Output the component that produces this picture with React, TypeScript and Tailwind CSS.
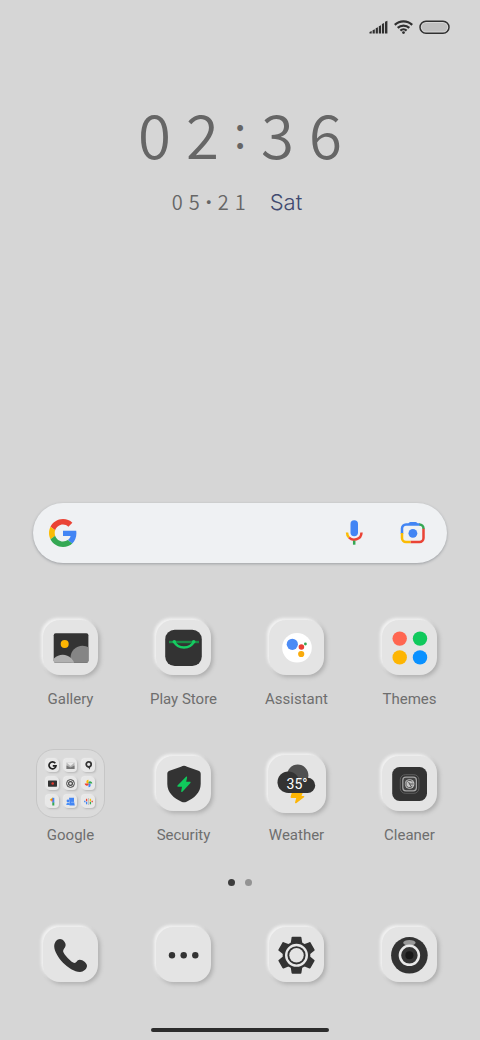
import type { ReactNode } from "react";

type AppItem = { label: string; icon: ReactNode; size?: "large" | "folder" };

function Gallery() {
  return (
    <svg viewBox="0 0 55 55" className="size-full" aria-hidden="true">
      <defs>
        <clipPath id="photo">
          <rect x="10.7" y="13.2" width="34.7" height="29.6" rx="2" />
        </clipPath>
      </defs>
      <g clipPath="url(#photo)">
        <rect x="10" y="13" width="36" height="30" fill="#333" />
        <circle cx="21.7" cy="24" r="4" fill="#fdb503" />
        <circle cx="39.5" cy="37.7" r="12" fill="#858585" />
        <circle cx="19.7" cy="46.7" r="12" fill="#b0b0b0" />
      </g>
    </svg>
  );
}

function PlayStore() {
  return (
    <svg viewBox="0 0 55 55" className="size-full" aria-hidden="true">
      <rect x="9.2" y="9.8" width="36.6" height="36.2" rx="9.5" fill="#333" />
      <path d="M13 22h30" stroke="#1a8b45" strokeWidth="2.4" />
      <path d="M18 21.5c2 4 5.5 6 10 6s8-2 10-6" fill="none" stroke="#16cc62" strokeWidth="2.5" />
      <circle cx="18.3" cy="21.8" r="1.8" fill="#16cc62" />
      <circle cx="37.7" cy="21.8" r="1.8" fill="#16cc62" />
    </svg>
  );
}

function Assistant() {
  return (
    <svg viewBox="0 0 55 55" className="size-full" aria-hidden="true">
      <circle cx="28" cy="27.7" r="14.8" fill="#fff" />
      <circle cx="23.3" cy="24.3" r="5.6" fill="#4c8bf5" />
      <circle cx="32.4" cy="27" r="2.8" fill="#e94235" />
      <circle cx="36.4" cy="24" r="1.4" fill="#34a853" />
      <circle cx="32.2" cy="34" r="3.1" fill="#f9ab0c" />
    </svg>
  );
}

function Themes() {
  return (
    <svg viewBox="0 0 55 55" className="size-full" aria-hidden="true">
      <circle cx="17.7" cy="18.6" r="7.2" fill="#ff6651" />
      <circle cx="38" cy="18.6" r="7.2" fill="#10c95c" />
      <circle cx="17.7" cy="37.4" r="7.2" fill="#fdb503" />
      <circle cx="38" cy="37.4" r="7.2" fill="#0a91ff" />
    </svg>
  );
}

function Security() {
  return (
    <svg viewBox="0 0 55 55" className="size-full" aria-hidden="true">
      <path
        d="M28 9.7c1 0 2 .5 3 1l11.5 4.1c1.5.5 2.2 1.5 2.2 3V28c0 8.5-6.7 14.5-14.2 17.7-1.8.8-3.2.8-5 0C18 42.5 11.3 36.5 11.3 28V17.8c0-1.5.7-2.5 2.2-3L25 10.7c1-.5 2-1 3-1z"
        fill="#333"
      />
      <path
        d="M29.8 21l-8.3 8.6c-.5.6-.2 1.200.5 1.200h4l-.8 4.400c-.1.9.6 1.200 1.200.6l8-8.800c.4-.6.2-1.200-.5-1.200h-3.700l.9-4.300c.1-.9-.7-1.200-1.300-.5z"
        fill="#10c95c"
      />
    </svg>
  );
}

function Weather() {
  return (
    <svg viewBox="0 0 58 58" className="size-full" aria-hidden="true">
      <path d="M24 37h11l-1.500 4h2c1 0 1 .8.5 1.300L28.500 48c-.8.7-1.700.3-1.400-.7l1.100-4.300h-4.700c-.8 0-1.100-.5-.9-1.200z" fill="#fdb503" />
      <circle cx="29.7" cy="20.3" r="10.7" fill="#505050" />
      <g fill="#333">
        <circle cx="20.3" cy="27.2" r="10.8" />
        <circle cx="39.6" cy="30.4" r="7.6" />
        <rect x="20" y="27" width="20" height="11" />
      </g>
      <text x="29" y="34" textAnchor="middle" fill="#fff" className="font-['Roboto',sans-serif] text-[14px]">
        35°
      </text>
    </svg>
  );
}

function Cleaner() {
  return (
    <svg viewBox="0 0 55 55" className="size-full" aria-hidden="true">
      <rect x="10.2" y="11" width="34.8" height="34" rx="7.5" fill="#333" />
      <rect x="18.3" y="18.7" width="18.6" height="18.6" rx="5" fill="none" stroke="#686868" strokeWidth=".8" />
      <rect x="20.8" y="21.2" width="13.6" height="13.6" rx="3" fill="#444" stroke="#a8a8a8" strokeWidth="1.2" />
      <circle cx="27.6" cy="28" r="4.8" fill="#c4c4c4" />
      <path d="M30.5 26a3.6 3.6 0 1 0 0 4M27.6 28h4M27.6 28l2 3M27.6 28l-1-2" fill="none" stroke="#555" strokeWidth="1" />
    </svg>
  );
}

function Phone() {
  return (
    <svg viewBox="0 0 55 55" className="size-full" aria-hidden="true">
      <path
        d="M17 12c3 0 6 3.500 5.600 6.500-.3 2.500-2.700 3.800-2.500 5.800.3 2.700 8.200 11.500 11.400 11.700 2 0 2.500-3 5-3.200 3-.3 7.500 3 7.500 6.200-.2 3-3.500 5.900-7 5.900C26 44.700 11.500 29 11.200 19.200 11.200 15.200 14 12 17 12z"
        fill="#333"
      />
    </svg>
  );
}

function Messages() {
  return (
    <svg viewBox="0 0 55 55" className="size-full" aria-hidden="true">
      <g fill="#333">
        <circle cx="16" cy="28.2" r="3.2" />
        <circle cx="27.7" cy="28.2" r="3.2" />
        <circle cx="39.3" cy="28.2" r="3.2" />
      </g>
    </svg>
  );
}

const TEETH = [0, 60, 120, 180, 240, 300];

function Settings() {
  return (
    <svg viewBox="0 0 55 55" className="size-full" aria-hidden="true">
      <g transform="translate(27.5 28.3)">
        {TEETH.map((angle) => (
          <path
            key={angle}
            d="M-4-18.5h8c.6 0 .8.3.9.8L5.8-12h-11.6l.9-5.7c.1-.5.3-.8.9-.8z"
            transform={`rotate(${angle})`}
            fill="#333"
          />
        ))}
        <circle r="13.8" fill="#333" />
        <circle r="10.3" fill="none" stroke="#e8e8e8" strokeWidth="2.4" />
        <circle r="7.2" fill="#e4e4e4" />
      </g>
    </svg>
  );
}

function Camera() {
  return (
    <svg viewBox="0 0 55 55" className="size-full" aria-hidden="true">
      <circle cx="27.4" cy="28.3" r="18.3" fill="#333" />
      <ellipse cx="27.4" cy="15.8" rx="6.2" ry="2.9" fill="#999" />
      <circle cx="27.4" cy="28.3" r="9.5" fill="#333" stroke="#e8e8e8" strokeWidth="2.5" />
      <circle cx="27.4" cy="28.3" r="4" fill="#181818" />
    </svg>
  );
}

// Miniature icons of the folder, each on a 13 unit tile
const MINIS: ReactNode[] = [
  <path d="M9.3 4.2A3.5 3.5 0 1 0 10 6.8H6.8" fill="none" stroke="#222" strokeWidth="1.7" />,
  <>
    <rect x="2.5" y="3.5" width="8" height="6.5" fill="#b5b5b5" />
    <path d="M2.5 3.5l4 3.5 4-3.5z" fill="#e9e9e9" />
    <path d="M2.5 10V6.5l4 2 4-2V10z" fill="#777" />
  </>,
  <>
    <circle cx="6.7" cy="5.3" r="2.5" fill="none" stroke="#333" strokeWidth="1.7" />
    <path d="M5.5 7.500l2.500 3.200V7z" fill="#333" />
  </>,
  <>
    <rect x="2" y="3.5" width="9" height="6.200" rx=".6" fill="#333" />
    <circle cx="6.7" cy="6.500" r="1.300" fill="#e8392e" />
  </>,
  <>
    <circle cx="6.5" cy="6.5" r="3.9" fill="none" stroke="#444" strokeWidth="1" />
    <circle cx="6.5" cy="6.5" r="1.9" fill="none" stroke="#444" strokeWidth="1.2" />
  </>,
  <>
    <path d="M6.5 6.5V2.7a2.2 2.2 0 0 0-1.5 3.800z" fill="#fbbc04" />
    <path d="M6.5 6.5h3.800a2.200 2.200 0 0 0-3.800-1.500z" fill="#34a853" />
    <path d="M6.5 6.5v3.800a2.200 2.200 0 0 0 1.500-3.800z" fill="#4285f4" />
    <path d="M6.5 6.5H2.700a2.200 2.200 0 0 0 3.800 1.500z" fill="#ea4335" />
  </>,
  <>
    <path d="M4.3 5.300l3-2.100" stroke="#fbbc04" strokeWidth="1.8" />
    <path d="M7.3 2.8v5" stroke="#4285f4" strokeWidth="2" />
    <path d="M7.3 7.500v3" stroke="#34a853" strokeWidth="2" />
    <path d="M6 4v2.500" stroke="#ea4335" strokeWidth="1" />
  </>,
  <>
    <path d="M5 2.7h5v4l.8 3.8H5.5V7z" fill="#4285f4" />
    <circle cx="4" cy="6" r="1.4" fill="#4285f4" />
    <path d="M2.3 10c0-3 3.400-3 4 0z" fill="#4a90f7" />
    <path d="M7 7.3h3.500" stroke="#a9c8fa" strokeWidth=".6" />
  </>,
  <g fill="none" strokeWidth="1.3">
    <path d="M4.600 3.800v2.500" stroke="#ea4335" />
    <path d="M4.600 6.800v2.500" stroke="#4285f4" />
    <path d="M6.500 3v7" stroke="#c2c2c2" strokeWidth="1" />
    <path d="M8.400 3.800v2.500" stroke="#fbbc04" />
    <path d="M8.400 6.800v2.500" stroke="#34a853" />
    <path d="M2.800 5.800v1.500" stroke="#4285f4" />
    <path d="M10.200 5.800v1.500" stroke="#ea4335" />
  </g>,
];

function Folder() {
  return (
    <span className="grid grid-cols-3 gap-[5px]">
      {MINIS.map((mini, i) => (
        <span key={i} className="size-[13px] rounded-[4px] bg-[#e8e8e8] shadow-[1px_1px_2px_#b8b8b8,-1px_-1px_1px_#ededed]">
          <svg viewBox="0 0 13 13" className="size-full" aria-hidden="true">
            {mini}
          </svg>
        </span>
      ))}
    </span>
  );
}

const APPS: AppItem[] = [
  { label: "Gallery", icon: <Gallery /> },
  { label: "Play Store", icon: <PlayStore /> },
  { label: "Assistant", icon: <Assistant /> },
  { label: "Themes", icon: <Themes /> },
  { label: "Google", icon: <Folder />, size: "folder" },
  { label: "Security", icon: <Security /> },
  { label: "Weather", icon: <Weather />, size: "large" },
  { label: "Cleaner", icon: <Cleaner /> },
];

const DOCK: AppItem[] = [
  { label: "Phone", icon: <Phone /> },
  { label: "Messages", icon: <Messages /> },
  { label: "Settings", icon: <Settings /> },
  { label: "Camera", icon: <Camera /> },
];

const TILE = {
  normal: "size-[55px] rounded-[17px] bg-[#e4e4e4] shadow-[-2px_-2px_3px_#f2f2f2,2px_2px_4px_#adadad]",
  large: "size-[58px] rounded-[17px] bg-[#e4e4e4] shadow-[-2px_-2px_3px_#f2f2f2,2px_2px_4px_#adadad]",
  folder: "flex size-[69px] items-center justify-center rounded-[18px] border border-[#c6c6c6] bg-[#dbdbdb]",
};

function Tile({ app }: { app: AppItem }) {
  return (
    <span className="flex h-[69px] items-center justify-center">
      <span className={TILE[app.size ?? "normal"]}>{app.icon}</span>
    </span>
  );
}

function StatusBar() {
  return (
    <header className="flex items-center justify-end gap-1.5 px-[30px] pt-5">
      <svg viewBox="0 0 19 14" className="h-3.5 w-[19px]" fill="#303030" aria-label="Signal">
        <path d="M.5 13.5v-1.500l2.200-1v2.500zM3.600 13.500v-3.200l2.200-1v4.200zM6.700 13.500V8.300l2.200-1v6.200zM9.800 13.500V6.200l2.200-1v8.300zM12.900 13.500V4l2.200-1v10.500zM16 13.500V1.700l2.400-1v12.800z" />
      </svg>
      <svg viewBox="0 0 19 14" className="h-3.5 w-[19px]" fill="none" stroke="#303030" strokeWidth="2.2" aria-label="Wi-Fi">
        <path d="M.8 4.9a12.500 12.500 0 0 1 17.400 0M3.700 7.900a8.300 8.300 0 0 1 11.600 0M6.400 10.600a4.500 4.500 0 0 1 6.200 0" />
        <circle cx="9.5" cy="12.6" r="1.4" fill="#303030" stroke="none" />
      </svg>
      <svg viewBox="0 0 31 14" className="h-3.5 w-[31px]" aria-label="Battery">
        <rect x="1" y="1.2" width="29" height="12" rx="6" fill="#d6d6d6" stroke="#303030" strokeWidth="1.5" />
        <rect x="2.8" y="3" width="25.4" height="8.4" rx="4.2" fill="#c0c0c0" />
      </svg>
    </header>
  );
}

function Clock() {
  return (
    <section className="mt-[63px] flex flex-col items-center font-['Noto_Sans_CJK_SC',sans-serif] font-[350] text-[#666]">
      <time className="flex gap-[15px] text-[60px] leading-[72px]">
        <span>0</span>
        <span>2</span>
        <span className="flex w-3 justify-center text-[44px] leading-[64px] font-normal">:</span>
        <span>3</span>
        <span>6</span>
      </time>
      <p className="mt-[21px] flex items-center pr-1.5 text-[20px] leading-6">
        <span className="flex gap-1.5">
          <span>0</span>
          <span>5</span>
          <span className="flex w-1.5 justify-center font-light">·</span>
          <span>2</span>
          <span>1</span>
        </span>
        <span className="ml-6 font-['Inter',sans-serif] text-[22px] text-[#414a70]">Sat</span>
      </p>
    </section>
  );
}

function SearchBar() {
  return (
    <form
      className="mx-[33px] mt-auto flex h-15 items-center rounded-full bg-[#eff1f3] pr-5 pl-4 shadow-[0_1px_3px_#9c9fa3]"
      onSubmit={(e) => e.preventDefault()}
    >
      <svg viewBox="0 0 48 48" className="size-7 shrink-0" aria-hidden="true">
        <path fill="#ea4335" d="M24 9.500c3.540 0 6.710 1.220 9.210 3.600l6.850-6.850C35.900 2.380 30.470 0 24 0 14.620 0 6.510 5.380 2.560 13.220l7.980 6.190C12.430 13.720 17.740 9.500 24 9.500z" />
        <path fill="#4285f4" d="M46.980 24.550c0-1.570-.15-3.090-.38-4.550H24v9.020h12.940c-.58 2.960-2.260 5.480-4.780 7.180l7.730 6c4.510-4.180 7.090-10.360 7.090-17.650z" />
        <path fill="#fbbc05" d="M10.530 28.590c-.48-1.450-.76-2.990-.76-4.590s.27-3.140.76-4.590l-7.980-6.190C.92 16.460 0 20.120 0 24c0 3.880.92 7.540 2.560 10.780l7.970-6.190z" />
        <path fill="#34a853" d="M24 48c6.480 0 11.930-2.130 15.890-5.810l-7.730-6c-2.150 1.450-4.920 2.300-8.160 2.300-6.260 0-11.570-4.220-13.470-9.910l-7.980 6.190C6.510 42.620 14.620 48 24 48z" />
      </svg>
      <input type="text" aria-label="Search" className="h-full min-w-0 flex-1 bg-transparent px-4 outline-none" />
      <button type="button" aria-label="Voice search" className="mr-[31px] size-7">
        <svg viewBox="0 0 28 28" className="size-full" fill="none" strokeWidth="2.5">
          <rect x="10.5" y="1.2" width="7.5" height="16" rx="3.7" fill="#4285f4" />
          <path d="M7 13.5a7.700 7.700 0 0 0 2 5" stroke="#fbbc04" />
          <path d="M9 18.5c3.500 3.800 12.300 2.700 12.500-5" stroke="#ea4335" />
          <path d="M14.2 21.7v4" stroke="#34a853" />
        </svg>
      </button>
      <button type="button" aria-label="Search with camera" className="size-7">
        <svg viewBox="0 0 28 28" className="size-full" fill="none" strokeWidth="2.5">
          <path d="M3 15V9.500a4 4 0 0 1 4-4H21" stroke="#4285f4" />
          <path d="M8.500 6l1.500-2.200c.4-.5.8-.8 1.500-.8h5c.7 0 1.100.3 1.500.8L19.500 6z" fill="#4285f4" />
          <path d="M20.5 5.500a4 4 0 0 1 4 4V10" stroke="#34a853" />
          <path d="M24.5 9.800v9.200a4 4 0 0 1-4 4h-9" stroke="#ea4335" />
          <path d="M11.5 23H7a4 4 0 0 1-4-4V14" stroke="#fbbc04" />
          <circle cx="13.9" cy="14.3" r="4.4" fill="#4285f4" />
        </svg>
      </button>
    </form>
  );
}

export default function App() {
  return (
    <main className="flex min-h-screen flex-col bg-[#d6d6d6] font-['Roboto',sans-serif]">
      <StatusBar />
      <Clock />
      <SearchBar />
      <section className="mt-[50px] grid grid-cols-4 gap-y-10 px-3.5">
        {APPS.map((app) => (
          <button key={app.label} type="button">
            <Tile app={app} />
            <span className="mt-[7px] block text-[15px] leading-5 text-[#6e6e6e]">{app.label}</span>
          </button>
        ))}
      </section>
      <div className="mt-[34px] flex justify-center gap-2.5">
        <span className="size-[7px] rounded-full bg-[#3c3c3c]" />
        <span className="size-[7px] rounded-full bg-[#939393]" />
      </div>
      <nav className="mt-[34px] grid grid-cols-4 px-3.5">
        {DOCK.map((app) => (
          <button key={app.label} type="button" aria-label={app.label}>
            <Tile app={app} />
          </button>
        ))}
      </nav>
      <div className="mx-auto mt-[39px] mb-2 h-1 w-[178px] rounded-full bg-[#2c2c2c]" />
    </main>
  );
}
